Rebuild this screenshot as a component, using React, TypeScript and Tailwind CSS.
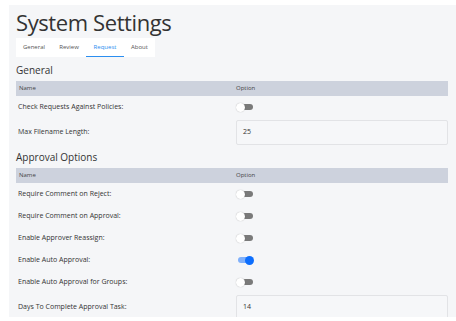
import React from "react";

function Toggle({ on }: { on?: boolean }) {
  return (
    <div className="relative w-[18px] h-[9px] flex items-center">
      <div className={`ml-[2px] w-[15px] h-[6px] rounded-full ${on ? "bg-[#7fb0fb]" : "bg-[#7a7a7a]"}`} />
      {on ? (
        <div className="absolute left-[9px] top-0 w-[9px] h-[9px] rounded-full bg-[#0d6efd]" />
      ) : (
        <div className="absolute left-0 top-0 w-[9px] h-[9px] rounded-full bg-white shadow-[0_0_1px_rgba(0,0,0,0.35)]" />
      )}
    </div>
  );
}

function HeaderBar() {
  return (
    <div className="flex h-[15px] items-center bg-[#cdd2dd] text-[6px] text-[#444]">
      <div className="w-[218px] pl-[3px]">Name</div>
      <div className="pl-[2px]">Option</div>
    </div>
  );
}

function Row({ label, children, h = "h-[22px]" }: { label: string; children: React.ReactNode; h?: string }) {
  return (
    <div className={`flex items-center ${h}`}>
      <div className="w-[218px] pl-[2px] text-[7px] text-[#333]">{label}</div>
      <div className="flex-1 flex items-center pl-[2px]">{children}</div>
    </div>
  );
}

function Input({ value }: { value: string }) {
  return (
    <div className="w-[212px] h-[25px] border border-[#e2e3e6] rounded-[2px] bg-[#f6f7f9] flex items-center pl-[6px] text-[7px] text-[#333]">
      {value}
    </div>
  );
}

export default function App() {
  return (
    <div className="w-full h-[321px] bg-white pt-[5px] pl-[9px]" style={{ fontFamily: '"Open Sans", sans-serif' }}>
      <div className="h-[312px] bg-[#f5f6f8] pl-[7px] pr-[8px] overflow-hidden">
        <h1 className="text-[22px] leading-[30px] pt-[2px] text-[#333] font-normal tracking-[-0.4px]">System Settings</h1>
        <div className="mt-[1px] flex w-[139px] h-[19px] bg-white text-[6px] text-[#555]">
          <div className="w-[36px] flex items-center justify-center">General</div>
          <div className="w-[34px] flex items-center justify-center">Review</div>
          <div className="w-[38px] h-full flex items-center justify-center text-[#2b8ef0] border-b-[1.5px] border-[#2b8ef0]">Request</div>
          <div className="w-[31px] flex items-center justify-center">About</div>
        </div>
        <div className="mt-[6px] text-[10px] leading-[14px] text-[#333]">General</div>
        <div className="mt-[4px]">
          <HeaderBar />
          <Row label="Check Requests Against Policies:">
            <Toggle />
          </Row>
          <Row label="Max Filename Length:" h="h-[29px]">
            <Input value="25" />
          </Row>
        </div>
        <div className="mt-[3px] text-[10px] leading-[14px] text-[#333]">Approval Options</div>
        <div className="mt-[4px]">
          <HeaderBar />
          <Row label="Require Comment on Reject:"><Toggle /></Row>
          <Row label="Require Comment on Approval:"><Toggle /></Row>
          <Row label="Enable Approver Reassign:"><Toggle /></Row>
          <Row label="Enable Auto Approval:"><Toggle on /></Row>
          <Row label="Enable Auto Approval for Groups:"><Toggle /></Row>
          <Row label="Days To Complete Approval Task:" h="h-[29px]">
            <Input value="14" />
          </Row>
        </div>
      </div>
    </div>
  );
}
